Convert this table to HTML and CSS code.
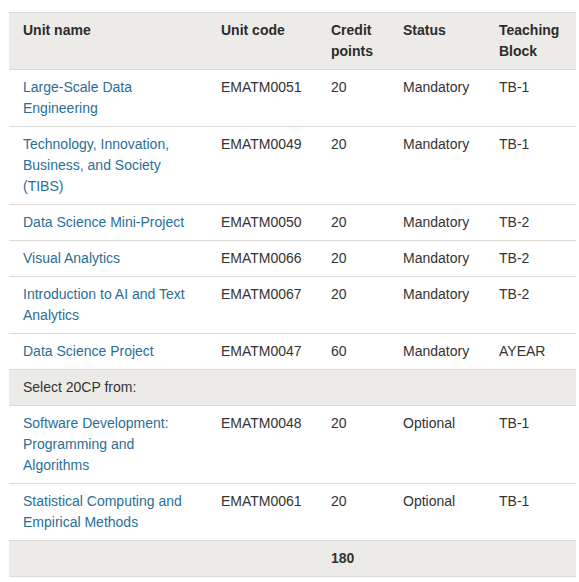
FILE: index.html
```html
<!DOCTYPE html>
<html lang="en">
<head>
<meta charset="utf-8">
<title>Units</title>
<link rel="stylesheet" href="styles.css">
</head>
<body>
<table class="units">
  <colgroup>
    <col class="c-name">
    <col class="c-code">
    <col class="c-cp">
    <col class="c-status">
    <col class="c-tb">
  </colgroup>
  <thead>
    <tr class="head">
      <th>Unit name</th>
      <th>Unit code</th>
      <th>Credit points</th>
      <th>Status</th>
      <th>Teaching Block</th>
    </tr>
  </thead>
  <tbody>
    <tr><td><a href="#">Large-Scale Data Engineering</a></td><td>EMATM0051</td><td>20</td><td>Mandatory</td><td>TB-1</td></tr>
    <tr><td><a href="#">Technology, Innovation, Business, and Society (TIBS)</a></td><td>EMATM0049</td><td>20</td><td>Mandatory</td><td>TB-1</td></tr>
    <tr><td><a href="#">Data Science Mini-Project</a></td><td>EMATM0050</td><td>20</td><td>Mandatory</td><td>TB-2</td></tr>
    <tr><td><a href="#">Visual Analytics</a></td><td>EMATM0066</td><td>20</td><td>Mandatory</td><td>TB-2</td></tr>
    <tr><td><a href="#">Introduction to AI and Text Analytics</a></td><td>EMATM0067</td><td>20</td><td>Mandatory</td><td>TB-2</td></tr>
    <tr><td><a href="#">Data Science Project</a></td><td>EMATM0047</td><td>60</td><td>Mandatory</td><td>AYEAR</td></tr>
    <tr class="group"><td colspan="5">Select 20CP from:</td></tr>
    <tr><td><a href="#">Software Development: Programming and Algorithms</a></td><td>EMATM0048</td><td>20</td><td>Optional</td><td>TB-1</td></tr>
    <tr><td><a href="#">Statistical Computing and Empirical Methods</a></td><td>EMATM0061</td><td>20</td><td>Optional</td><td>TB-1</td></tr>
    <tr class="total"><td></td><td></td><td>180</td><td></td><td></td></tr>
  </tbody>
</table>
</body>
</html>
```
FILE: styles.css
```css
html, body {
  margin: 0;
  padding: 0;
  background: #ffffff;
}
body {
  padding: 12px 3px 0 9px;
  font-family: "Liberation Sans", Arial, sans-serif;
  font-size: 14px;
  line-height: 21px;
  color: #333333;
}
.units {
  width: 567px;
  border-collapse: collapse;
  table-layout: fixed;
}
.c-name { width: 198px; }
.c-code { width: 110px; }
.c-cp { width: 72px; }
.c-status { width: 96px; }
.c-tb { width: 91px; }
.units th,
.units td {
  padding: 7px 14px;
  text-align: left;
  vertical-align: top;
  border-top: 1px solid #dcdad6;
  border-bottom: 1px solid #dcdad6;
}
.units th {
  font-weight: bold;
  color: #2e2b2b;
}
.head,
.group,
.total {
  background: #edebe8;
}
.total td {
  font-weight: bold;
}
.units a {
  color: #2a6f95;
  text-decoration: none;
}
```
